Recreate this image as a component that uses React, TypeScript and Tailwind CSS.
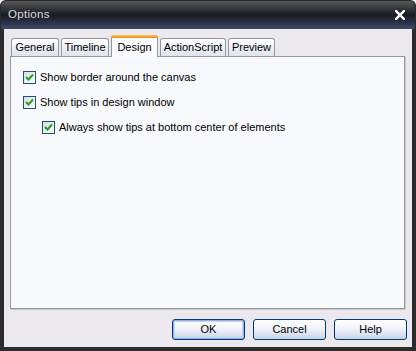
import React from "react";

const font = { fontFamily: '"Liberation Sans", Arial, sans-serif' };

function Check({ label }: { label: string }) {
  return (
    <div className="flex items-center h-[13px]">
      <div className="w-[13px] h-[13px] border border-[#1c5180] bg-gradient-to-br from-[#dcdcd7] to-white flex items-center justify-center">
        <svg width="9" height="9" viewBox="0 0 9 9">
          <path d="M1 4 L3.5 6.5 L8 1.5" stroke="#21a121" strokeWidth="2" fill="none" />
        </svg>
      </div>
      <span className="ml-[4px] text-[11px] text-black leading-none">{label}</span>
    </div>
  );
}

function Tab({ label, w, active }: { label: string; w: number; active?: boolean }) {
  if (active) {
    return (
      <div
        className="relative h-[22px] -mb-px z-10 border-x border-[#919b9c] bg-[#fcfcfe] rounded-t-[3px] flex flex-col"
        style={{ width: w }}
      >
        <div className="h-[3px] -mx-px rounded-t-[3px] bg-gradient-to-b from-[#ffc83c] to-[#e68b2c]" />
        <div className="flex-1 flex items-center justify-center text-[11px] text-black leading-none pb-[1px]">{label}</div>
      </div>
    );
  }
  return (
    <div
      className="h-[18px] border border-b-0 border-[#919b9c] rounded-t-[3px] bg-gradient-to-b from-white to-[#dfe3ec] flex items-center justify-center text-[11px] text-black leading-none"
      style={{ width: w }}
    >
      {label}
    </div>
  );
}

function Btn({ label, def }: { label: string; def?: boolean }) {
  return (
    <div className="w-[73px] h-[21px] rounded-[3px] border border-[#003c74] bg-gradient-to-b from-white via-[#eef1f8] to-[#c9d3e6] flex items-center justify-center text-[11px] text-black leading-none"
      style={def ? { boxShadow: "inset 0 0 0 1px #97aee2, inset 0 0 0 2px #c7d6f4" } : undefined}>
      {label}
    </div>
  );
}

export default function App() {
  return (
    <div className="w-[416px] h-[351px] flex flex-col bg-[#2c2c2c] rounded-t-[6px] overflow-hidden" style={font}>
      <div className="h-[29px] shrink-0 flex items-center justify-between pl-[7px] pr-[10px] bg-gradient-to-b from-[#5a5a5a] via-[#181b24] to-[#3d4966] border-x border-t border-[#2a2a2a] rounded-t-[6px]">
        <span className="text-[#dcdcdc] text-[11.5px] tracking-[0.3px]">Options</span>
        <svg width="10" height="10" viewBox="0 0 10 10">
          <path d="M1 1 L9 9 M9 1 L1 9" stroke="#ffffff" strokeWidth="2.4" strokeLinecap="square" />
        </svg>
      </div>
      <div className="flex-1 flex flex-col mx-[4px] mb-[4px] bg-[#ece9ee]">
        <div className="flex flex-col pl-[6px] pr-[7px] pt-[6px]">
          <div className="flex items-end gap-[2px] pl-[1px] h-[21px]">
            <Tab label="General" w={48} />
            <Tab label="Timeline" w={48} />
            <Tab label="Design" w={47} active />
            <Tab label="ActionScript" w={66} />
            <Tab label="Preview" w={47} />
          </div>
          <div className="h-[253px] border border-[#919b9c] bg-[#f8f9fd] shadow-[1px_1px_0_#c8c8c8] flex flex-col gap-[12px] pt-[14px] pl-[12px]">
            <Check label="Show border around the canvas" />
            <Check label="Show tips in design window" />
            <div className="pl-[19px]">
              <Check label="Always show tips at bottom center of elements" />
            </div>
          </div>
        </div>
        <div className="flex justify-end gap-[8px] pr-[5px] pt-[10px]">
          <Btn label="OK" def />
          <Btn label="Cancel" />
          <Btn label="Help" />
        </div>
      </div>
    </div>
  );
}
